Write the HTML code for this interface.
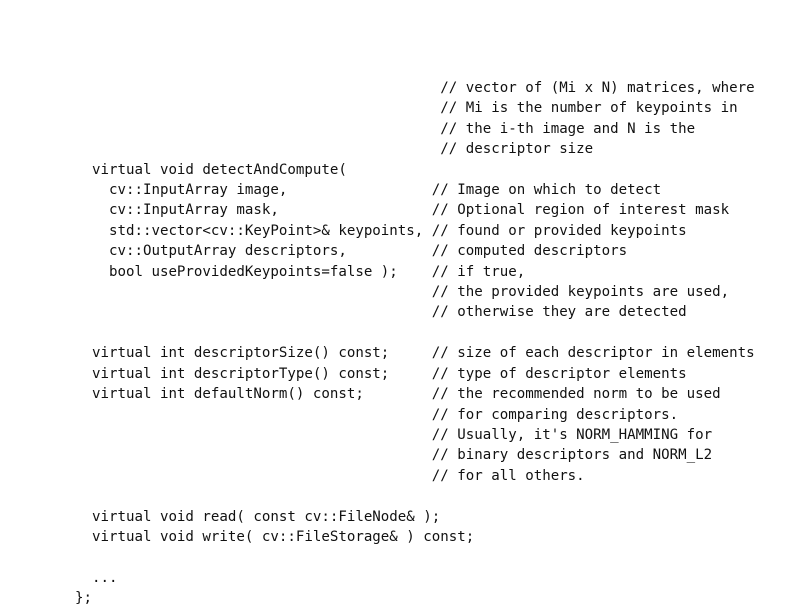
<!DOCTYPE html>
<html><head><style>
html,body{margin:0;padding:0;background:#fff;width:800px;height:614px;overflow:hidden}
pre{position:absolute;left:75px;top:78px;margin:0;font-family:"DejaVu Sans Mono","Liberation Mono",monospace;font-size:14.12px;line-height:20.4px;color:#111}
</style></head><body>
<pre>                                           // vector of (Mi x N) matrices, where
                                           // Mi is the number of keypoints in
                                           // the i-th image and N is the
                                           // descriptor size
  virtual void detectAndCompute(
    cv::InputArray image,                 // Image on which to detect
    cv::InputArray mask,                  // Optional region of interest mask
    std::vector&lt;cv::KeyPoint&gt;&amp; keypoints, // found or provided keypoints
    cv::OutputArray descriptors,          // computed descriptors
    bool useProvidedKeypoints=false );    // if true,
                                          // the provided keypoints are used,
                                          // otherwise they are detected

  virtual int descriptorSize() const;     // size of each descriptor in elements
  virtual int descriptorType() const;     // type of descriptor elements
  virtual int defaultNorm() const;        // the recommended norm to be used
                                          // for comparing descriptors.
                                          // Usually, it's NORM_HAMMING for
                                          // binary descriptors and NORM_L2
                                          // for all others.

  virtual void read( const cv::FileNode&amp; );
  virtual void write( cv::FileStorage&amp; ) const;

  ...
};</pre>
</body></html>
